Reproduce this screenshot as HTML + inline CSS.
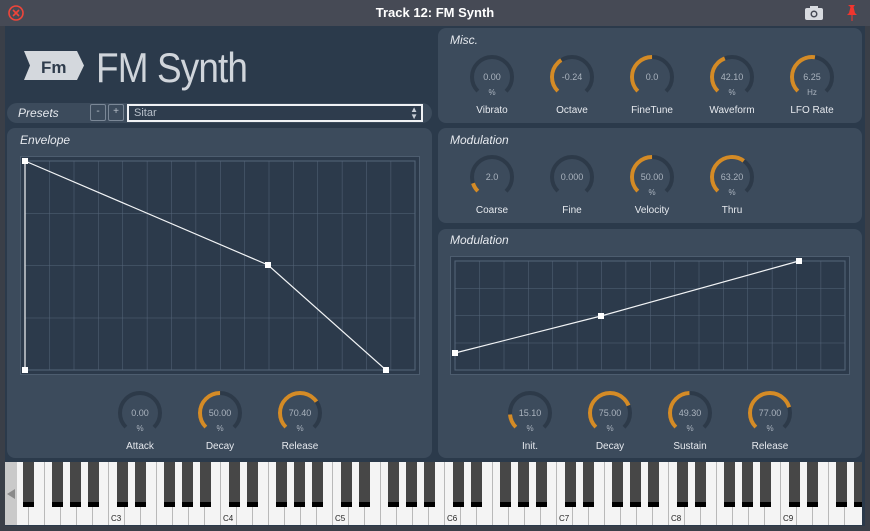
<!DOCTYPE html><html><head><meta charset="utf-8"><style>
*{margin:0;padding:0;box-sizing:border-box}
body{width:870px;height:531px;overflow:hidden;background:#2b3a4b;font-family:"Liberation Sans",sans-serif;position:relative}
.tb{position:absolute;left:0;top:0;width:870px;height:26px;background:#464a55;color:#fff;font-weight:bold;font-size:13px;text-align:center;line-height:26px}
.frame{position:absolute;left:0;top:26px;width:870px;height:505px;border:5px solid #3a3f48;border-top:none}
.p{position:absolute;background:#3c4b5c;border-radius:8px}
.h{position:absolute;color:#e6e9ee;font-style:italic;font-size:12px}
svg{position:absolute;left:0;top:0}
</style></head><body>
<div class="tb">Track 12: FM Synth</div>
<div class="frame"></div>
<div class="p" style="left:7px;top:103px;width:425px;height:20px;border-radius:10px"></div>
<div class="h" style="left:18px;top:106px">Presets</div>
<div style="position:absolute;left:90px;top:104px;width:16px;height:17px;border:1px solid #7a8796;border-radius:2px;color:#b8c0ca;font-size:10px;text-align:center;line-height:14px">-</div>
<div style="position:absolute;left:108px;top:104px;width:16px;height:17px;border:1px solid #7a8796;border-radius:2px;color:#b8c0ca;font-size:10px;text-align:center;line-height:14px">+</div>
<div style="position:absolute;left:127px;top:104px;width:296px;height:18px;border:2px solid #f0f2f5;background:#2e3c4d;color:#b8c0ca;font-size:11px;line-height:14px;padding-left:5px">Sitar<span style="position:absolute;right:3px;top:0;font-size:8px;line-height:7px;color:#c8ced6">▲<br>▼</span></div>
<div class="p" style="left:7px;top:128px;width:425px;height:330px"></div>
<div class="h" style="left:20px;top:133px">Envelope</div>
<div class="p" style="left:438px;top:28px;width:424px;height:95px"></div>
<div class="h" style="left:450px;top:33px">Misc.</div>
<div class="p" style="left:438px;top:128px;width:424px;height:95px"></div>
<div class="h" style="left:450px;top:133px">Modulation</div>
<div class="p" style="left:438px;top:229px;width:424px;height:229px"></div>
<div class="h" style="left:450px;top:233px">Modulation</div>
<div style="position:absolute;left:96px;top:44px;font-size:42px;color:#d0d5db;letter-spacing:-1px;transform:scaleX(0.88);transform-origin:0 0;white-space:nowrap">FM Synth</div>
<svg width="870" height="531">
<defs>
<pattern id="g1" x="25" y="161" width="24.375" height="52.25" patternUnits="userSpaceOnUse"><path d="M0 0V53M0 0H25" stroke="#55657a" stroke-width="1" fill="none"/></pattern>
<pattern id="g2" x="455" y="261" width="24.375" height="27.25" patternUnits="userSpaceOnUse"><path d="M0 0V28M0 0H25" stroke="#55657a" stroke-width="1" fill="none"/></pattern>
</defs>
<circle cx="16" cy="13" r="7" fill="none" stroke="#f0453a" stroke-width="1.6"/><path d="M13 10l6 6M19 10l-6 6" stroke="#f0453a" stroke-width="1.6"/>
<rect x="805" y="8" width="18" height="12" rx="2" fill="#d8dbe0"/><rect x="810" y="6" width="8" height="3" fill="#d8dbe0"/><circle cx="814" cy="14" r="3.5" fill="#464a55"/><circle cx="814" cy="14" r="2" fill="#d8dbe0"/>
<path d="M848 5h7l-1.5 2 1.5 6 2 2h-4.5v6h-1v-6h-4.5l2-2 1.5-6z" fill="#f0352e"/>
<path d="M24 51h53l7 14.5-7 14.5h-53l6-14.5z" fill="#d4d8dd"/>
<text x="41" y="73" font-family="Liberation Sans" font-weight="bold" font-size="17" fill="#2f3c4c">Fm</text>
<rect x="20.5" y="156.5" width="399" height="218" fill="#2c3a4b" stroke="#4d5d6f"/>
<rect x="25" y="161" width="390" height="209" fill="url(#g1)" stroke="#55657a"/>
<polyline points="25,370 25,161 268,265 386,370" fill="none" stroke="#f2f4f6" stroke-width="1.2"/>
<g fill="#fff"><rect x="22" y="158" width="6" height="6"/><rect x="265" y="262" width="6" height="6"/><rect x="383" y="367" width="6" height="6"/><rect x="22" y="367" width="6" height="6"/></g>
<rect x="450.5" y="256.5" width="399" height="118" fill="#2c3a4b" stroke="#4d5d6f"/>
<rect x="455" y="261" width="390" height="109" fill="url(#g2)" stroke="#55657a"/>
<polyline points="455,353 601,316 799,261" fill="none" stroke="#f2f4f6" stroke-width="1.2"/>
<g fill="#fff"><rect x="452" y="350" width="6" height="6"/><rect x="598" y="313" width="6" height="6"/><rect x="796" y="258" width="6" height="6"/></g>
</svg>
<svg width="870" height="531">
<g fill="none" stroke-width="4">
<g stroke="#2d3a49" stroke-dasharray="94.25 200">
<circle cx="492" cy="77" r="20" transform="rotate(135 492 77)"/>
<circle cx="572" cy="77" r="20" transform="rotate(135 572 77)"/>
<circle cx="652" cy="77" r="20" transform="rotate(135 652 77)"/>
<circle cx="732" cy="77" r="20" transform="rotate(135 732 77)"/>
<circle cx="812" cy="77" r="20" transform="rotate(135 812 77)"/>
<circle cx="492" cy="177" r="20" transform="rotate(135 492 177)"/>
<circle cx="572" cy="177" r="20" transform="rotate(135 572 177)"/>
<circle cx="652" cy="177" r="20" transform="rotate(135 652 177)"/>
<circle cx="732" cy="177" r="20" transform="rotate(135 732 177)"/>
<circle cx="140" cy="413" r="20" transform="rotate(135 140 413)"/>
<circle cx="220" cy="413" r="20" transform="rotate(135 220 413)"/>
<circle cx="300" cy="413" r="20" transform="rotate(135 300 413)"/>
<circle cx="530" cy="413" r="20" transform="rotate(135 530 413)"/>
<circle cx="610" cy="413" r="20" transform="rotate(135 610 413)"/>
<circle cx="690" cy="413" r="20" transform="rotate(135 690 413)"/>
<circle cx="770" cy="413" r="20" transform="rotate(135 770 413)"/>
</g>
<g stroke="#d48b26">
<circle cx="572" cy="77" r="20" transform="rotate(135 572 77)" stroke-dasharray="35.8 200"/>
<circle cx="652" cy="77" r="20" transform="rotate(135 652 77)" stroke-dasharray="47.1 200"/>
<circle cx="732" cy="77" r="20" transform="rotate(135 732 77)" stroke-dasharray="39.7 200"/>
<circle cx="812" cy="77" r="20" transform="rotate(135 812 77)" stroke-dasharray="50 200"/>
<circle cx="492" cy="177" r="20" transform="rotate(135 492 177)" stroke-dasharray="9.4 200"/>
<circle cx="652" cy="177" r="20" transform="rotate(135 652 177)" stroke-dasharray="47.1 200"/>
<circle cx="732" cy="177" r="20" transform="rotate(135 732 177)" stroke-dasharray="59.6 200"/>
<circle cx="220" cy="413" r="20" transform="rotate(135 220 413)" stroke-dasharray="47.1 200"/>
<circle cx="300" cy="413" r="20" transform="rotate(135 300 413)" stroke-dasharray="66.4 200"/>
<circle cx="530" cy="413" r="20" transform="rotate(135 530 413)" stroke-dasharray="14.2 200"/>
<circle cx="610" cy="413" r="20" transform="rotate(135 610 413)" stroke-dasharray="70.7 200"/>
<circle cx="690" cy="413" r="20" transform="rotate(135 690 413)" stroke-dasharray="46.5 200"/>
<circle cx="770" cy="413" r="20" transform="rotate(135 770 413)" stroke-dasharray="72.6 200"/>
</g></g>
<g font-family="Liberation Sans" font-size="9" fill="#aab3be" text-anchor="middle">
<text x="492" y="80">0.00</text><text x="492" y="95" font-size="8">%</text>
<text x="572" y="80">-0.24</text>
<text x="652" y="80">0.0</text>
<text x="732" y="80">42.10</text><text x="732" y="95" font-size="8">%</text>
<text x="812" y="80">6.25</text><text x="812" y="95" font-size="8">Hz</text>
<text x="492" y="180">2.0</text>
<text x="572" y="180">0.000</text>
<text x="652" y="180">50.00</text><text x="652" y="195" font-size="8">%</text>
<text x="732" y="180">63.20</text><text x="732" y="195" font-size="8">%</text>
<text x="140" y="416">0.00</text><text x="140" y="431" font-size="8">%</text>
<text x="220" y="416">50.00</text><text x="220" y="431" font-size="8">%</text>
<text x="300" y="416">70.40</text><text x="300" y="431" font-size="8">%</text>
<text x="530" y="416">15.10</text><text x="530" y="431" font-size="8">%</text>
<text x="610" y="416">75.00</text><text x="610" y="431" font-size="8">%</text>
<text x="690" y="416">49.30</text><text x="690" y="431" font-size="8">%</text>
<text x="770" y="416">77.00</text><text x="770" y="431" font-size="8">%</text>
</g>
<g font-family="Liberation Sans" font-size="10" fill="#e6e9ee" text-anchor="middle">
<text x="492" y="113">Vibrato</text><text x="572" y="113">Octave</text><text x="652" y="113">FineTune</text><text x="732" y="113">Waveform</text><text x="812" y="113">LFO Rate</text>
<text x="492" y="213">Coarse</text><text x="572" y="213">Fine</text><text x="652" y="213">Velocity</text><text x="732" y="213">Thru</text>
<text x="140" y="449">Attack</text><text x="220" y="449">Decay</text><text x="300" y="449">Release</text>
<text x="530" y="449">Init.</text><text x="610" y="449">Decay</text><text x="690" y="449">Sustain</text><text x="770" y="449">Release</text>
</g>
<rect x="5" y="462" width="857" height="63" fill="#f4f4f4"/>
<g stroke="#b9b9b9" stroke-width="1">
<path d="M28.5 462V525M44.5 462V525M60.5 462V525M76.5 462V525M92.5 462V525M108.5 462V525M124.5 462V525M140.5 462V525M156.5 462V525M172.5 462V525M188.5 462V525M204.5 462V525M220.5 462V525M236.5 462V525M252.5 462V525M268.5 462V525M284.5 462V525M300.5 462V525M316.5 462V525M332.5 462V525M348.5 462V525M364.5 462V525M380.5 462V525M396.5 462V525M412.5 462V525M428.5 462V525M444.5 462V525M460.5 462V525M476.5 462V525M492.5 462V525M508.5 462V525M524.5 462V525M540.5 462V525M556.5 462V525M572.5 462V525M588.5 462V525M604.5 462V525M620.5 462V525M636.5 462V525M652.5 462V525M668.5 462V525M684.5 462V525M700.5 462V525M716.5 462V525M732.5 462V525M748.5 462V525M764.5 462V525M780.5 462V525M796.5 462V525M812.5 462V525M828.5 462V525M844.5 462V525"/>
</g>
<g fill="#000">
<path d="M23 462h11v45h-11zM52 462h11v45h-11zM70 462h11v45h-11zM88 462h11v45h-11zM117 462h11v45h-11zM135 462h11v45h-11zM164 462h11v45h-11zM182 462h11v45h-11zM200 462h11v45h-11zM229 462h11v45h-11zM247 462h11v45h-11zM276 462h11v45h-11zM294 462h11v45h-11zM312 462h11v45h-11zM341 462h11v45h-11zM359 462h11v45h-11zM388 462h11v45h-11zM406 462h11v45h-11zM424 462h11v45h-11zM453 462h11v45h-11zM471 462h11v45h-11zM500 462h11v45h-11zM518 462h11v45h-11zM536 462h11v45h-11zM565 462h11v45h-11zM583 462h11v45h-11zM612 462h11v45h-11zM630 462h11v45h-11zM648 462h11v45h-11zM677 462h11v45h-11zM695 462h11v45h-11zM724 462h11v45h-11zM742 462h11v45h-11zM760 462h11v45h-11zM789 462h11v45h-11zM807 462h11v45h-11zM836 462h11v45h-11zM854 462h8v45h-8z"/>
</g>
<g fill="#474747">
<path d="M23 462h11v40h-11zM52 462h11v40h-11zM70 462h11v40h-11zM88 462h11v40h-11zM117 462h11v40h-11zM135 462h11v40h-11zM164 462h11v40h-11zM182 462h11v40h-11zM200 462h11v40h-11zM229 462h11v40h-11zM247 462h11v40h-11zM276 462h11v40h-11zM294 462h11v40h-11zM312 462h11v40h-11zM341 462h11v40h-11zM359 462h11v40h-11zM388 462h11v40h-11zM406 462h11v40h-11zM424 462h11v40h-11zM453 462h11v40h-11zM471 462h11v40h-11zM500 462h11v40h-11zM518 462h11v40h-11zM536 462h11v40h-11zM565 462h11v40h-11zM583 462h11v40h-11zM612 462h11v40h-11zM630 462h11v40h-11zM648 462h11v40h-11zM677 462h11v40h-11zM695 462h11v40h-11zM724 462h11v40h-11zM742 462h11v40h-11zM760 462h11v40h-11zM789 462h11v40h-11zM807 462h11v40h-11zM836 462h11v40h-11zM854 462h8v40h-8z"/>
</g>
<rect x="5" y="462" width="12" height="63" fill="#c9c9c9"/>
<path d="M7 494l8-5v10z" fill="#8a8a8a"/>
<g font-family="Liberation Sans" font-size="8" fill="#222">
<text x="111" y="521">C3</text><text x="223" y="521">C4</text><text x="335" y="521">C5</text><text x="447" y="521">C6</text><text x="559" y="521">C7</text><text x="671" y="521">C8</text><text x="783" y="521">C9</text>
</g>
</svg>
</body></html>
